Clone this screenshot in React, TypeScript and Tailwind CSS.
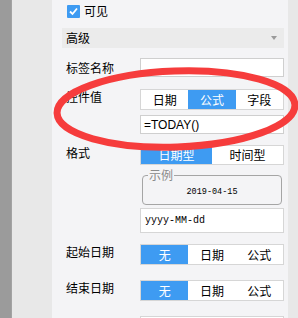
import React from "react";

const font = { fontFamily: '"Noto Sans CJK SC", "Liberation Sans", sans-serif' };

function Seg({ items, active }: { items: string[]; active: number }) {
  return (
    <div className="flex h-[21px] w-[144px] border border-[#d6d6d6] bg-white">
      {items.map((t, i) => (
        <div
          key={t}
          className={
            "flex flex-1 items-center justify-center text-[12px] leading-none " +
            (i === active ? "bg-[#3e9bf2] text-white" : "text-black")
          }
        >
          {t}
        </div>
      ))}
    </div>
  );
}

function Row({ label, children, first }: { label: string; children: React.ReactNode; first?: boolean }) {
  return (
    <div className="flex items-start">
      <div className={"w-[78px] shrink-0 pl-[4px] h-[20px] leading-[20px] text-[12px] text-black " + (first ? "" : "-mt-[2px]")}>{label}</div>
      <div>{children}</div>
    </div>
  );
}

export default function App() {
  return (
    <div className="relative flex h-[318px] w-[298px] overflow-hidden" style={font}>
      <div className="w-[11px] shrink-0 bg-[#9b9b9b]" />
      <div className="w-[41px] shrink-0 bg-[#e8e8e8] border-l border-[#a3a3a3]" />
      <div className="flex-1 bg-[#f4f4f6] pl-[10px] pr-[4px]">
        <div className="mt-[4px] flex h-[14px] items-center pl-[5px]">
          <div className="flex h-[13px] w-[13px] items-center justify-center rounded-[1px] bg-[#3e9bf2]">
            <svg width="11" height="11" viewBox="0 0 11 11">
              <path d="M2 5.5 L4.5 8 L9 2.5" stroke="white" strokeWidth="1.8" fill="none" />
            </svg>
          </div>
          <span className="ml-[4px] text-[12px] leading-none text-black">可见</span>
        </div>
        <div className="mt-[10px] flex h-[20px] items-center justify-between bg-[#ebebeb] pl-[4px] pr-[7px]">
          <span className="text-[12px] leading-none text-black">高级</span>
          <svg width="6" height="4" viewBox="0 0 6 4">
            <path d="M0 0 L6 0 L3 4 Z" fill="#9a9a9a" />
          </svg>
        </div>
        <div className="mt-[10px]">
          <Row label="标签名称" first>
            <div className="h-[19px] w-[144px] border border-[#cfcfcf] bg-white" />
          </Row>
        </div>
        <div className="mt-[11px]">
          <Row label="控件值">
            <Seg items={["日期", "公式", "字段"]} active={1} />
            <div
              className="mt-[5px] flex h-[19px] w-[144px] items-center border border-[#cfcfcf] bg-white pl-[3px] text-[12px] text-black"
              style={{ fontFamily: '"Liberation Sans", sans-serif' }}
            >
              =TODAY()
            </div>
          </Row>
        </div>
        <div className="mt-[11px]">
          <Row label="格式">
            <div className="flex h-[20px] w-[144px] border border-[#d6d6d6] bg-white">
              <div className="flex flex-1 items-center justify-center bg-[#3e9bf2] text-[12px] leading-none text-white">日期型</div>
              <div className="flex flex-1 items-center justify-center text-[12px] leading-none text-black">时间型</div>
            </div>
            <fieldset className="mt-[4px] ml-[2px] h-[36px] w-[140px] rounded-[4px] border border-[#a5a5a5]">
              <legend className="ml-[5px] px-[1px] text-[12px] leading-[12px] text-[#8a8a8a]">示例</legend>
              <div
                className="flex h-[23px] items-center justify-center text-[8.5px] text-black"
                style={{ fontFamily: '"Liberation Mono", monospace' }}
              >
                2019-04-15
              </div>
            </fieldset>
            <div
              className="mt-[3px] flex h-[25px] w-[144px] items-center border border-[#d6d6d6] bg-white pl-[4px] text-[10px] text-black"
              style={{ fontFamily: '"Liberation Mono", monospace' }}
            >
              yyyy-MM-dd
            </div>
          </Row>
        </div>
        <div className="mt-[11px]">
          <Row label="起始日期">
            <Seg items={["无", "日期", "公式"]} active={0} />
          </Row>
        </div>
        <div className="mt-[15px]">
          <Row label="结束日期">
            <Seg items={["无", "日期", "公式"]} active={0} />
          </Row>
        </div>
        <div className="mt-[15px] ml-[78px] h-[20px] w-[144px] border border-[#d6d6d6] bg-white" />
      </div>
      <div className="w-[10px] shrink-0 bg-[#e8e8e8]" />
      <svg className="pointer-events-none absolute left-0 top-0" width="298" height="318" viewBox="0 0 298 318">
        <ellipse
          cx="176"
          cy="109"
          rx="119"
          ry="38"
          transform="rotate(-2 176 109)"
          fill="none"
          stroke="#f63c3c"
          strokeWidth="7"
        />
      </svg>
    </div>
  );
}
